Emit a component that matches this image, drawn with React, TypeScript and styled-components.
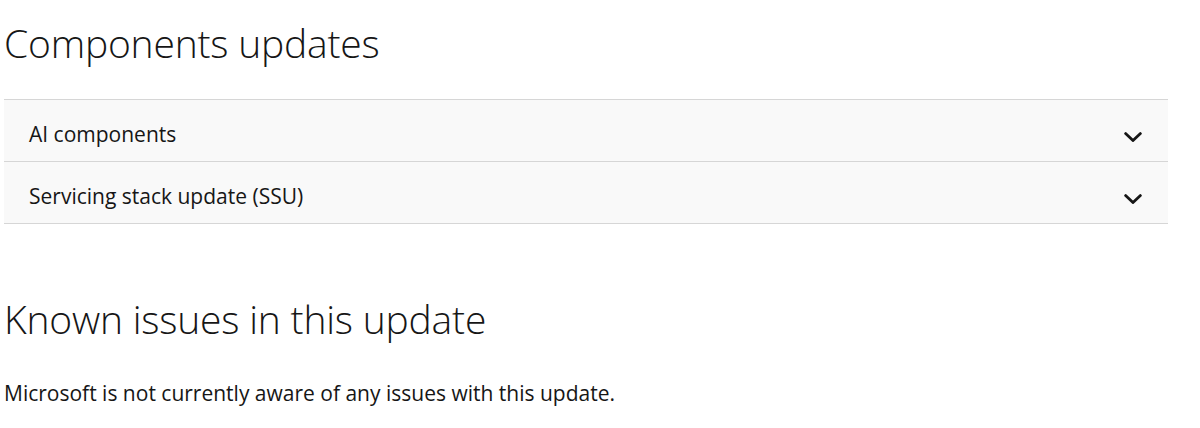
import styled, { createGlobalStyle } from "styled-components";

const GlobalStyle = createGlobalStyle`
    html, body {
        margin: 0;
        padding: 0;
        background: #ffffff;
    }
    body {
        font-family: "Open Sans", "Noto Sans", "Liberation Sans", sans-serif;
        color: #161616;
    }
`;

const Page = styled.main`
    padding: 0 32px 0 4px;
`;

const Heading = styled.h2<{ $top: number }>`
    margin: ${(p) => p.$top}px 0 0 0;
    font-family: "Open Sans", "Noto Sans", sans-serif;
    font-weight: 300;
    font-size: 39px;
    line-height: 50px;
    letter-spacing: -0.2px;
    color: #161616;
`;

const Accordion = styled.div`
    margin-top: 31px;
    border-top: 1px solid #d6d6d6;
`;

const Item = styled.div`
    display: flex;
    align-items: center;
    justify-content: space-between;
    box-sizing: border-box;
    height: 62px;
    padding: 7px 26px 0 25px;
    background: #f9f9f9;
    border-bottom: 1px solid #d6d6d6;
`;

const ItemTitle = styled.span`
    font-size: 21px;
    line-height: 28px;
    color: #161616;
`;

const ChevronIcon = styled.svg`
    flex: none;
    margin-top: 5px;
`;

const Paragraph = styled.p`
    margin: 35px 0 0 0;
    font-size: 21px;
    line-height: 28px;
    color: #161616;
`;

function Chevron() {
    return (
        <ChevronIcon width="18" height="10" viewBox="0 0 18 10" fill="none">
            <path d="M1.6 1.6 L9 8.6 L16.4 1.6" stroke="#161616" strokeWidth="2.8" strokeLinecap="round" strokeLinejoin="round" />
        </ChevronIcon>
    );
}

const items = ["AI components", "Servicing stack update (SSU)"];

export default function App() {
    return (
        <>
            <GlobalStyle />
            <Page>
                <Heading $top={18}>Components updates</Heading>
                <Accordion>
                    {items.map((t) => (
                        <Item key={t}>
                            <ItemTitle>{t}</ItemTitle>
                            <Chevron />
                        </Item>
                    ))}
                </Accordion>
                <Heading $top={70}>Known issues in this update</Heading>
                <Paragraph>Microsoft is not currently aware of any issues with this update.</Paragraph>
            </Page>
        </>
    );
}
